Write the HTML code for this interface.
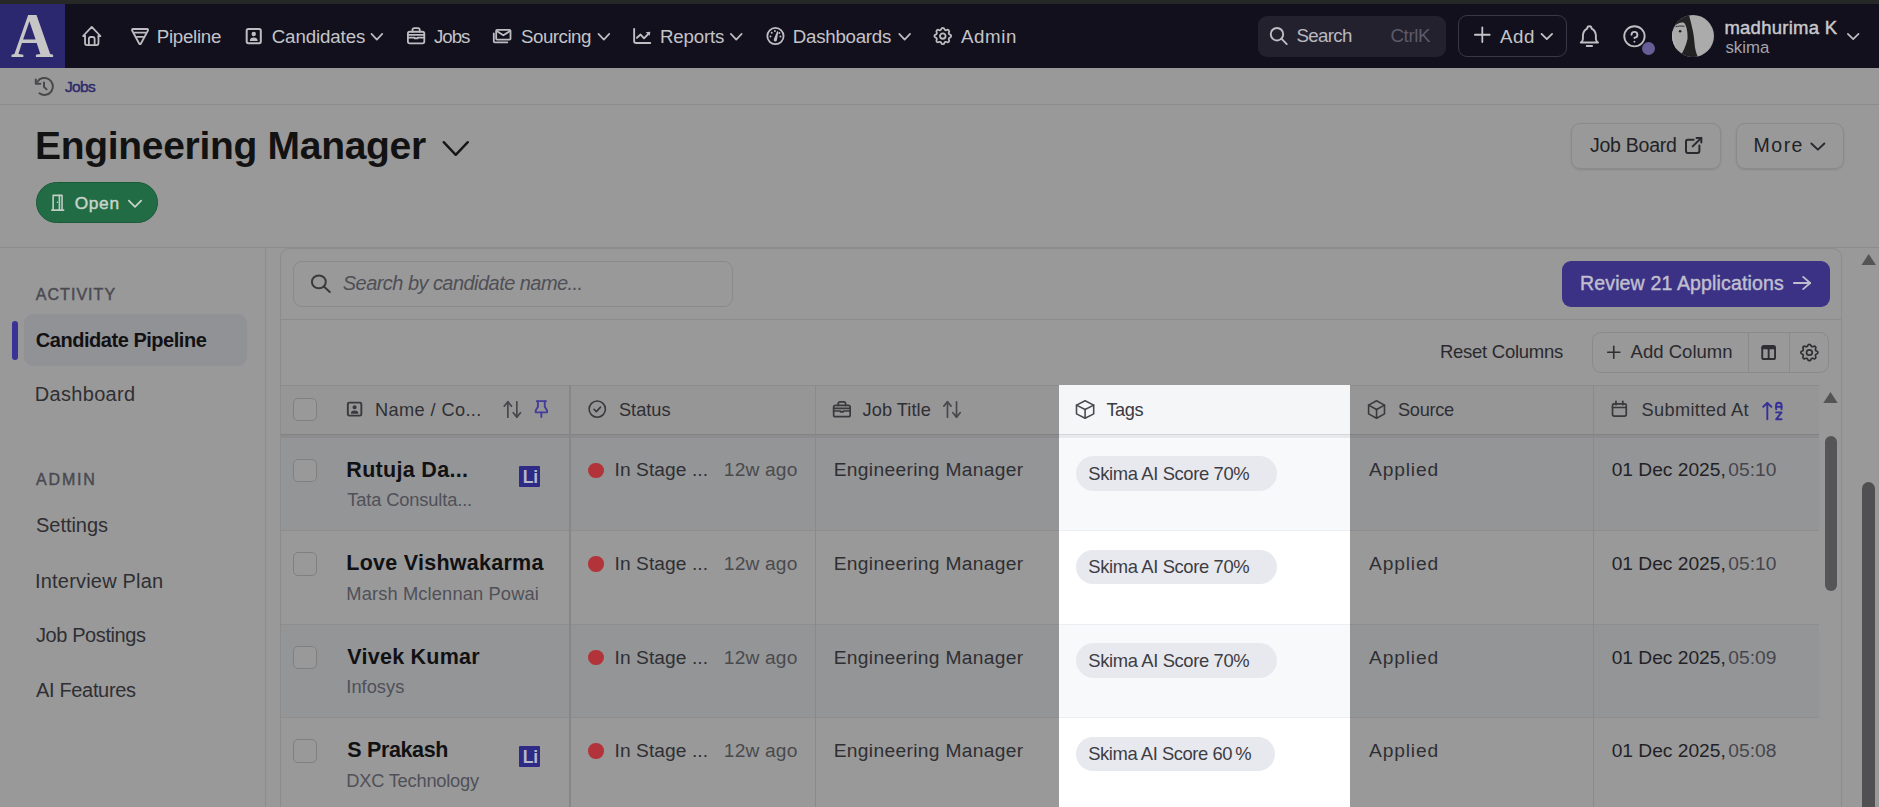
<!DOCTYPE html>
<html><head><meta charset="utf-8"><title>Engineering Manager</title><style>
*{margin:0;padding:0;box-sizing:border-box}
html,body{width:1879px;height:807px;overflow:hidden;background:#999999;font-family:"Liberation Sans", sans-serif}
.t{position:absolute;white-space:nowrap;line-height:1}
.b{position:absolute}
#icons{position:absolute;left:0;top:0;width:1879px;height:807px;overflow:visible}
</style></head>
<body>
<div class="b" style="left:0px;top:0px;width:1879px;height:4px;background:#262727"></div><div class="b" style="left:0px;top:4px;width:1879px;height:64px;background:#12101d"></div><div class="b" style="left:0px;top:4px;width:65px;height:64px;background:#2c2870"></div><div class="b" style="left:1258.4px;top:15.5px;width:187.4px;height:41.3px;background:#24212f;border-radius:9px"></div><div class="b" style="left:1457.8px;top:15.2px;width:109.2px;height:41.6px;border:1.3px solid #3a3848;border-radius:9px"></div><div class="b" style="left:1642px;top:41.8px;width:13px;height:13px;background:#675e98;border-radius:50%"></div><div class="b" style="left:0px;top:104px;width:1879px;height:1px;background:#8c8c8c"></div><div class="b" style="left:35.5px;top:182px;width:122px;height:41px;background:#226c45;border:1px solid #1b5a39;border-radius:21px"></div><div class="b" style="left:1570.9px;top:122.7px;width:150.5px;height:46.6px;border:1.3px solid #8a8a8a;border-radius:9px;box-shadow:0 1px 2px rgba(0,0,0,.12)"></div><div class="b" style="left:1735.5px;top:122.7px;width:108.7px;height:46.6px;border:1.3px solid #8a8a8a;border-radius:9px;box-shadow:0 1px 2px rgba(0,0,0,.12)"></div><div class="b" style="left:0px;top:246.5px;width:1879px;height:1px;background:#8c8c8c"></div><div class="b" style="left:264.5px;top:247px;width:1px;height:560px;background:#8c8c8c"></div><div class="b" style="left:24px;top:314.3px;width:222.5px;height:51.6px;background:#919296;border-radius:9px"></div><div class="b" style="left:11.8px;top:320.6px;width:5.9px;height:39.4px;background:#3a3396;border-radius:3px"></div><div class="b" style="left:280px;top:247.5px;width:1562px;height:600px;border:1px solid #8c8c8c;border-radius:9px"></div><div class="b" style="left:293px;top:260.8px;width:440px;height:46.2px;border:1.3px solid #8a8a8a;border-radius:9px"></div><div class="b" style="left:1561.7px;top:260.6px;width:268.3px;height:46.8px;background:#3b3286;border-radius:9px"></div><div class="b" style="left:281px;top:319px;width:1560px;height:1px;background:#8c8c8c"></div><div class="b" style="left:1591.6px;top:332.4px;width:237.8px;height:40.4px;border:1.3px solid #8a8a8a;border-radius:9px"></div><div class="b" style="left:1747.5px;top:333px;width:1.2px;height:39.5px;background:#8a8a8a"></div><div class="b" style="left:1789px;top:333px;width:1.2px;height:39.5px;background:#8a8a8a"></div><div class="b" style="left:281px;top:385px;width:1538px;height:49px;background:#969697"></div><div class="b" style="left:281px;top:384.5px;width:1538px;height:1px;background:#8c8c8c"></div><div class="b" style="left:281px;top:435px;width:1538px;height:96px;background:#949597"></div><div class="b" style="left:281px;top:531px;width:1538px;height:94px;background:#999999"></div><div class="b" style="left:281px;top:530px;width:1538px;height:1px;background:#8e8e8f"></div><div class="b" style="left:281px;top:625px;width:1538px;height:93px;background:#949597"></div><div class="b" style="left:281px;top:624px;width:1538px;height:1px;background:#8e8e8f"></div><div class="b" style="left:281px;top:718px;width:1538px;height:102px;background:#999999"></div><div class="b" style="left:281px;top:717px;width:1538px;height:1px;background:#8e8e8f"></div><div class="b" style="left:281px;top:434.5px;width:1538px;height:3.5px;background:#8c8c8e"></div><div class="b" style="left:281px;top:433.5px;width:1538px;height:1.3px;background:#828283"></div><div class="b" style="left:568.5px;top:385px;width:2px;height:430px;background:#87878a"></div><div class="b" style="left:815px;top:385px;width:1.2px;height:430px;background:#8a8a8b"></div><div class="b" style="left:1592.5px;top:385px;width:1.2px;height:430px;background:#8a8a8b"></div><div class="b" style="left:293px;top:397.7px;width:23.5px;height:23.5px;border:1.3px solid #808081;border-radius:5px;background:#999"></div><div class="b" style="left:293px;top:458.7px;width:23.5px;height:23.5px;border:1.3px solid #808081;border-radius:5px;background:#999"></div><div class="b" style="left:293px;top:552.2px;width:23.5px;height:23.5px;border:1.3px solid #808081;border-radius:5px;background:#999"></div><div class="b" style="left:293px;top:645.7px;width:23.5px;height:23.5px;border:1.3px solid #808081;border-radius:5px;background:#999"></div><div class="b" style="left:293px;top:739.2px;width:23.5px;height:23.5px;border:1.3px solid #808081;border-radius:5px;background:#999"></div><div class="b" style="left:519.1px;top:465.8px;width:21.3px;height:21.1px;background:#2f2a85;border-radius:1px"></div><div class="b" style="left:519.1px;top:746.3px;width:21.3px;height:21.1px;background:#2f2a85;border-radius:1px"></div><div class="b" style="left:588px;top:462.5px;width:15.5px;height:15.5px;background:#b2333a;border-radius:50%"></div><div class="b" style="left:588px;top:556.0px;width:15.5px;height:15.5px;background:#b2333a;border-radius:50%"></div><div class="b" style="left:588px;top:649.5px;width:15.5px;height:15.5px;background:#b2333a;border-radius:50%"></div><div class="b" style="left:588px;top:743.0px;width:15.5px;height:15.5px;background:#b2333a;border-radius:50%"></div><div class="b" style="left:1059px;top:385px;width:291px;height:430px;background:#ffffff"></div><div class="b" style="left:1059px;top:385px;width:291px;height:49px;background:#f5f6f8"></div><div class="b" style="left:1059px;top:435px;width:291px;height:96px;background:#f8f9fb"></div><div class="b" style="left:1059px;top:530px;width:291px;height:1px;background:#eceef2"></div><div class="b" style="left:1059px;top:625px;width:291px;height:93px;background:#f8f9fb"></div><div class="b" style="left:1059px;top:624px;width:291px;height:1px;background:#eceef2"></div><div class="b" style="left:1059px;top:717px;width:291px;height:1px;background:#eceef2"></div><div class="b" style="left:1059px;top:434.5px;width:291px;height:3.5px;background:#e8e9ec"></div><div class="b" style="left:1059px;top:433.5px;width:291px;height:1.3px;background:#d5d6da"></div><div class="b" style="left:1076px;top:456.0px;width:201px;height:34.6px;background:#e8e9ee;border-radius:18px"></div><div class="b" style="left:1076px;top:549.5px;width:201px;height:34.6px;background:#e8e9ee;border-radius:18px"></div><div class="b" style="left:1076px;top:643.0px;width:201px;height:34.6px;background:#e8e9ee;border-radius:18px"></div><div class="b" style="left:1076px;top:736.5px;width:199px;height:34.6px;background:#e8e9ee;border-radius:18px"></div><div class="b" style="left:1824.8px;top:435.7px;width:12px;height:155.6px;background:#555557;border-radius:6px"></div><div class="b" style="left:1862.3px;top:481.5px;width:12.5px;height:400px;background:#505052;border-radius:6.5px"></div>
<span class="t" style="left:10.5px;top:4px;font-family:'Liberation Serif',serif;font-size:64px;line-height:64px;color:#c6c6c6;font-weight:700;transform:scaleX(0.92);transform-origin:0 0">A</span>
<svg style="position:absolute;left:1672px;top:15px;width:42px;height:42px" viewBox="0 0 42 42"><defs><clipPath id="avc"><circle cx="21" cy="21" r="21"/></clipPath></defs><g clip-path="url(#avc)"><rect width="42" height="42" fill="#ababab"/><path d="M0 12L0 42H9C6 37 3 30 2 24C1 19 1 15 0 12Z" fill="#b4b4b4"/><path d="M0 0H17C19 8 22 18 22.5 28C23 34 24 38 26 42H8C11 37 14 31 15.5 24C16 16 14 9 11.5 7.5C8 7 4 9 0 13Z" fill="#222"/><path d="M3.5 11.8C6 11 9 10.8 12.5 11.3" stroke="#333" stroke-width="1" fill="none"/><circle cx="8.1" cy="16.2" r="1.3" fill="#222"/></g></svg>
<span class="t" style="left:522.8px;top:467.6px;font-size:17.5px;line-height:18px;font-weight:700;color:#b8b8cc;letter-spacing:-0.2px">Li</span><span class="t" style="left:522.8px;top:748.1px;font-size:17.5px;line-height:18px;font-weight:700;color:#b8b8cc;letter-spacing:-0.2px">Li</span>
<svg id="icons" viewBox="0 0 1879 807"><g transform="translate(80.217 23.867) scale(0.9611 1.0111)"><path d="M5 12H3l9-9 9 9h-2" fill="none" stroke="#bdbdc2" stroke-width="1.8" vector-effect="non-scaling-stroke" stroke-linecap="round" stroke-linejoin="round"/><path d="M5 12v7a2 2 0 0 0 2 2h10a2 2 0 0 0 2-2v-7" fill="none" stroke="#bdbdc2" stroke-width="1.8" vector-effect="non-scaling-stroke" stroke-linecap="round" stroke-linejoin="round"/><path d="M9 21v-6a2 2 0 0 1 2-2h2a2 2 0 0 1 2 2v6" fill="none" stroke="#bdbdc2" stroke-width="1.8" vector-effect="non-scaling-stroke" stroke-linecap="round" stroke-linejoin="round"/></g><g transform="translate(129.073 25.127) scale(0.9148 0.9682)"><path d="M4.2 4h15.6a1 1 0 0 1 .85 1.5l-7.8 13.7a1 1 0 0 1-1.7 0l-7.8-13.7a1 1 0 0 1 .85-1.5z" fill="none" stroke="#bdbdc2" stroke-width="1.8" vector-effect="non-scaling-stroke" stroke-linecap="round" stroke-linejoin="round"/><path d="M6 7.8h12" fill="none" stroke="#bdbdc2" stroke-width="1.8" vector-effect="non-scaling-stroke" stroke-linecap="round" stroke-linejoin="round"/><path d="M8.6 12.2h6.8" fill="none" stroke="#bdbdc2" stroke-width="1.8" vector-effect="non-scaling-stroke" stroke-linecap="round" stroke-linejoin="round"/></g><g transform="translate(244.350 26.517) scale(0.7833 0.7944)"><path d="M3 5a2 2 0 0 1 2-2h14a2 2 0 0 1 2 2v14a2 2 0 0 1-2 2h-14a2 2 0 0 1-2-2z" fill="none" stroke="#bdbdc2" stroke-width="2.0" vector-effect="non-scaling-stroke" stroke-linecap="round" stroke-linejoin="round"/><path d="M9.2 9.4a2.8 2.8 0 1 0 5.6 0a2.8 2.8 0 1 0-5.6 0z" fill="#bdbdc2"/><path d="M7 18.2a5 4.3 0 0 1 10 0z" fill="#bdbdc2"/></g><g transform="translate(405.167 25.535) scale(0.9111 0.8882)"><path d="M3 9a2 2 0 0 1 2-2h14a2 2 0 0 1 2 2v9a2 2 0 0 1-2 2h-14a2 2 0 0 1-2-2z" fill="none" stroke="#bdbdc2" stroke-width="1.8" vector-effect="non-scaling-stroke" stroke-linecap="round" stroke-linejoin="round"/><path d="M8 7v-2a2 2 0 0 1 2-2h4a2 2 0 0 1 2 2v2" fill="none" stroke="#bdbdc2" stroke-width="1.8" vector-effect="non-scaling-stroke" stroke-linecap="round" stroke-linejoin="round"/><path d="M3 10.5h18" fill="none" stroke="#bdbdc2" stroke-width="1.8" vector-effect="non-scaling-stroke" stroke-linecap="round" stroke-linejoin="round"/><path d="M3 13.5h7.5v1h3v-1h7.5" fill="none" stroke="#bdbdc2" stroke-width="1.8" vector-effect="non-scaling-stroke" stroke-linecap="round" stroke-linejoin="round"/></g><g transform="translate(490.460 26.467) scale(0.9543 0.8333)"><path d="M7 4h13a1 1 0 0 1 1 1v9.7a1 1 0 0 1-1 1h-13a1 1 0 0 1-1-1v-9.7a1 1 0 0 1 1-1z" fill="none" stroke="#bdbdc2" stroke-width="1.8" vector-effect="non-scaling-stroke" stroke-linecap="round" stroke-linejoin="round"/><path d="M6.5 5.5l7 5 7-5" fill="none" stroke="#bdbdc2" stroke-width="1.8" vector-effect="non-scaling-stroke" stroke-linecap="round" stroke-linejoin="round"/><path d="M3.5 8.4v9.6a1 1 0 0 0 1 1h13.2" fill="none" stroke="#bdbdc2" stroke-width="1.8" vector-effect="non-scaling-stroke" stroke-linecap="round" stroke-linejoin="round"/></g><g transform="translate(630.125 25.300) scale(1.0063 0.8875)"><path d="M4 4v14a2 2 0 0 0 2 2h14" fill="none" stroke="#bdbdc2" stroke-width="1.9" vector-effect="non-scaling-stroke" stroke-linecap="round" stroke-linejoin="round"/><path d="M6.8 14.1l3.6-3.7 3.4 4.3 5.2-6" fill="none" stroke="#bdbdc2" stroke-width="1.9" vector-effect="non-scaling-stroke" stroke-linecap="round" stroke-linejoin="round"/><path d="M20 7.2l-4.6.6 4 3.9z" fill="#bdbdc2"/></g><g transform="translate(764.583 25.183) scale(0.9056 0.9056)"><path d="M12 12m-9 0a9 9 0 1 0 18 0a9 9 0 1 0-18 0" fill="none" stroke="#bdbdc2" stroke-width="1.8" vector-effect="non-scaling-stroke" stroke-linecap="round" stroke-linejoin="round"/><path d="M10.2 15.6L13.6 7.2a.8 .8 0 0 1 1.5 .5L13.7 16.2a1.8 1.8 0 1 1-3.5-.6z" fill="#bdbdc2"/><path d="M5.4 12.4a1.1 1.1 0 1 0 2.2 0a1.1 1.1 0 1 0-2.2 0z" fill="#bdbdc2"/><path d="M6.8 8.3a1.1 1.1 0 1 0 2.2 0a1.1 1.1 0 1 0-2.2 0z" fill="#bdbdc2"/><path d="M10.3 6.3a1.1 1.1 0 1 0 2.2 0a1.1 1.1 0 1 0-2.2 0z" fill="#bdbdc2"/><path d="M16.4 12.4a1.1 1.1 0 1 0 2.2 0a1.1 1.1 0 1 0-2.2 0z" fill="#bdbdc2"/><path d="M15.2 8.5a1.1 1.1 0 1 0 2.2 0a1.1 1.1 0 1 0-2.2 0z" fill="#bdbdc2"/></g><g transform="translate(931.600 25.183) scale(0.9333 0.9056)"><path d="M10.325 4.317c.426-1.756 2.924-1.756 3.35 0a1.724 1.724 0 0 0 2.573 1.066c1.543-.94 3.31.826 2.37 2.37a1.724 1.724 0 0 0 1.065 2.572c1.756.426 1.756 2.924 0 3.35a1.724 1.724 0 0 0-1.066 2.573c.94 1.543-.826 3.31-2.37 2.37a1.724 1.724 0 0 0-2.572 1.065c-.426 1.756-2.924 1.756-3.35 0a1.724 1.724 0 0 0-2.573-1.066c-1.543.94-3.31-.826-2.37-2.37a1.724 1.724 0 0 0-1.065-2.572c-1.756-.426-1.756-2.924 0-3.35a1.724 1.724 0 0 0 1.066-2.573c-.94-1.543.826-3.31 2.37-2.37c1 .608 2.296.07 2.572-1.065z" fill="none" stroke="#bdbdc2" stroke-width="1.8" vector-effect="non-scaling-stroke" stroke-linecap="round" stroke-linejoin="round"/><path d="M9 12a3 3 0 1 0 6 0a3 3 0 0 0-6 0" fill="none" stroke="#bdbdc2" stroke-width="1.8" vector-effect="non-scaling-stroke" stroke-linecap="round" stroke-linejoin="round"/></g><g transform="translate(366.050 25.300) scale(0.9000 0.9500)"><path d="M6 9l6 6 6-6" fill="none" stroke="#bdbdc2" stroke-width="1.7" vector-effect="non-scaling-stroke" stroke-linecap="round" stroke-linejoin="round"/></g><g transform="translate(593.050 25.300) scale(0.9000 0.9500)"><path d="M6 9l6 6 6-6" fill="none" stroke="#bdbdc2" stroke-width="1.7" vector-effect="non-scaling-stroke" stroke-linecap="round" stroke-linejoin="round"/></g><g transform="translate(725.450 25.300) scale(0.9000 0.9500)"><path d="M6 9l6 6 6-6" fill="none" stroke="#bdbdc2" stroke-width="1.7" vector-effect="non-scaling-stroke" stroke-linecap="round" stroke-linejoin="round"/></g><g transform="translate(893.850 25.300) scale(0.9000 0.9500)"><path d="M6 9l6 6 6-6" fill="none" stroke="#bdbdc2" stroke-width="1.7" vector-effect="non-scaling-stroke" stroke-linecap="round" stroke-linejoin="round"/></g><g transform="translate(1268.083 25.267) scale(0.8889 0.8944)"><path d="M10 10m-7 0a7 7 0 1 0 14 0a7 7 0 1 0-14 0" fill="none" stroke="#bdbdc2" stroke-width="1.9" vector-effect="non-scaling-stroke" stroke-linecap="round" stroke-linejoin="round"/><path d="M21 21l-6-6" fill="none" stroke="#bdbdc2" stroke-width="1.9" vector-effect="non-scaling-stroke" stroke-linecap="round" stroke-linejoin="round"/></g><g transform="translate(1469.614 22.150) scale(1.0571 1.0500)"><path d="M12 5v14" fill="none" stroke="#c4c4c8" stroke-width="1.8" vector-effect="non-scaling-stroke" stroke-linecap="round" stroke-linejoin="round"/><path d="M5 12h14" fill="none" stroke="#c4c4c8" stroke-width="1.8" vector-effect="non-scaling-stroke" stroke-linecap="round" stroke-linejoin="round"/></g><g transform="translate(1536.200 26.100) scale(0.8833 0.8667)"><path d="M6 9l6 6 6-6" fill="none" stroke="#c4c4c8" stroke-width="1.8" vector-effect="non-scaling-stroke" stroke-linecap="round" stroke-linejoin="round"/></g><g transform="translate(1576.425 22.756) scale(1.0813 1.1647)"><path d="M10 5a2 2 0 1 1 4 0a7 7 0 0 1 4 6v3a4 4 0 0 0 2 3h-16a4 4 0 0 0 2-3v-3a7 7 0 0 1 4-6" fill="none" stroke="#bdbdc2" stroke-width="1.9" vector-effect="non-scaling-stroke" stroke-linecap="round" stroke-linejoin="round"/><path d="M9.5 20h5" fill="none" stroke="#bdbdc2" stroke-width="1.9" vector-effect="non-scaling-stroke" stroke-linecap="round" stroke-linejoin="round"/></g><g transform="translate(1620.850 22.900) scale(1.1333 1.1167)"><path d="M12 12m-9 0a9 9 0 1 0 18 0a9 9 0 1 0-18 0" fill="none" stroke="#bdbdc2" stroke-width="1.9" vector-effect="non-scaling-stroke" stroke-linecap="round" stroke-linejoin="round"/><path d="M12 16.8v.01" fill="none" stroke="#bdbdc2" stroke-width="1.9" vector-effect="non-scaling-stroke" stroke-linecap="round" stroke-linejoin="round"/><path d="M12 13.6v-.4a2.6 2.6 0 1 0-2.6-2.6" fill="none" stroke="#bdbdc2" stroke-width="1.9" vector-effect="non-scaling-stroke" stroke-linecap="round" stroke-linejoin="round"/></g><g transform="translate(1842.500 25.900) scale(0.8917 0.8833)"><path d="M6 9l6 6 6-6" fill="none" stroke="#bdbdc2" stroke-width="1.7" vector-effect="non-scaling-stroke" stroke-linecap="round" stroke-linejoin="round"/></g><g fill="none" stroke="#48484c" stroke-width="2" stroke-linecap="round" stroke-linejoin="round"><path d="M37.4 81.7A8.5 8.5 0 1 1 39.4 93.3"/><path d="M35.8 79.5V83.8H40.3"/><path d="M44 82.4V86.9L46.6 89.4"/></g><g transform="translate(431.650 123.300) scale(2.0083 2.1000)"><path d="M6 9l6 6 6-6" fill="none" stroke="#161616" stroke-width="2.4" vector-effect="non-scaling-stroke" stroke-linecap="round" stroke-linejoin="round"/></g><g transform="translate(49.817 191.941) scale(0.6611 0.8647)"><path d="M3 21h18" fill="none" stroke="#c0ccc4" stroke-width="1.6" vector-effect="non-scaling-stroke" stroke-linecap="round" stroke-linejoin="round"/><path d="M5 21v-17h9.5v17" fill="none" stroke="#c0ccc4" stroke-width="1.6" vector-effect="non-scaling-stroke" stroke-linecap="round" stroke-linejoin="round"/><path d="M14.5 4h4v17" fill="none" stroke="#c0ccc4" stroke-width="1.6" vector-effect="non-scaling-stroke" stroke-linecap="round" stroke-linejoin="round"/><path d="M11.5 12h.01" fill="none" stroke="#c0ccc4" stroke-width="1.6" vector-effect="non-scaling-stroke" stroke-linecap="round" stroke-linejoin="round"/></g><g transform="translate(122.700 191.100) scale(1.0250 1.0500)"><path d="M6 9l6 6 6-6" fill="none" stroke="#c8d4cc" stroke-width="1.7" vector-effect="non-scaling-stroke" stroke-linecap="round" stroke-linejoin="round"/></g><g transform="translate(1682.175 134.125) scale(0.9562 0.9437)"><path d="M12 6h-6a2 2 0 0 0-2 2v10a2 2 0 0 0 2 2h10a2 2 0 0 0 2-2v-6" fill="none" stroke="#2a2a2e" stroke-width="2.0" vector-effect="non-scaling-stroke" stroke-linecap="round" stroke-linejoin="round"/><path d="M11 13l9-9" fill="none" stroke="#2a2a2e" stroke-width="2.0" vector-effect="non-scaling-stroke" stroke-linecap="round" stroke-linejoin="round"/><path d="M15 4h5v5" fill="none" stroke="#2a2a2e" stroke-width="2.0" vector-effect="non-scaling-stroke" stroke-linecap="round" stroke-linejoin="round"/></g><g transform="translate(1804.850 134.150) scale(1.0833 1.0333)"><path d="M6 9l6 6 6-6" fill="none" stroke="#2a2a2e" stroke-width="1.9" vector-effect="non-scaling-stroke" stroke-linecap="round" stroke-linejoin="round"/></g><g transform="translate(308.917 272.633) scale(0.9944 0.9222)"><path d="M10 10m-7 0a7 7 0 1 0 14 0a7 7 0 1 0-14 0" fill="none" stroke="#3a3a3e" stroke-width="2.0" vector-effect="non-scaling-stroke" stroke-linecap="round" stroke-linejoin="round"/><path d="M21 21l-6-6" fill="none" stroke="#3a3a3e" stroke-width="2.0" vector-effect="non-scaling-stroke" stroke-linecap="round" stroke-linejoin="round"/></g><g transform="translate(1788.114 270.800) scale(1.1571 1.0167)"><path d="M5 12h14" fill="none" stroke="#bfbecd" stroke-width="1.8" vector-effect="non-scaling-stroke" stroke-linecap="round" stroke-linejoin="round"/><path d="M13 18l6-6" fill="none" stroke="#bfbecd" stroke-width="1.8" vector-effect="non-scaling-stroke" stroke-linecap="round" stroke-linejoin="round"/><path d="M13 6l6 6" fill="none" stroke="#bfbecd" stroke-width="1.8" vector-effect="non-scaling-stroke" stroke-linecap="round" stroke-linejoin="round"/></g><g transform="translate(1603.379 342.186) scale(0.8643 0.8429)"><path d="M12 5v14" fill="none" stroke="#2f2f33" stroke-width="1.6" vector-effect="non-scaling-stroke" stroke-linecap="round" stroke-linejoin="round"/><path d="M5 12h14" fill="none" stroke="#2f2f33" stroke-width="1.6" vector-effect="non-scaling-stroke" stroke-linecap="round" stroke-linejoin="round"/></g><g transform="translate(1759.050 342.675) scale(0.8000 0.8187)"><path d="M4 6a2 2 0 0 1 2-2h12a2 2 0 0 1 2 2v12a2 2 0 0 1-2 2h-12a2 2 0 0 1-2-2z" fill="none" stroke="#2f2f33" stroke-width="1.9" vector-effect="non-scaling-stroke" stroke-linecap="round" stroke-linejoin="round"/><path d="M12 8v12" fill="none" stroke="#2f2f33" stroke-width="1.9" vector-effect="non-scaling-stroke" stroke-linecap="round" stroke-linejoin="round"/><path d="M4 6.5h16" fill="none" stroke="#2f2f33" stroke-width="1.9" vector-effect="non-scaling-stroke" stroke-linecap="round" stroke-linejoin="round"/><path d="M4 6a2 2 0 0 1 2-2h12a2 2 0 0 1 2 2v2h-16z" fill="#2f2f33"/></g><g transform="translate(1798.008 341.633) scale(0.9472 0.9056)"><path d="M10.325 4.317c.426-1.756 2.924-1.756 3.35 0a1.724 1.724 0 0 0 2.573 1.066c1.543-.94 3.31.826 2.37 2.37a1.724 1.724 0 0 0 1.065 2.572c1.756.426 1.756 2.924 0 3.35a1.724 1.724 0 0 0-1.066 2.573c.94 1.543-.826 3.31-2.37 2.37a1.724 1.724 0 0 0-2.572 1.065c-.426 1.756-2.924 1.756-3.35 0a1.724 1.724 0 0 0-2.573-1.066c-1.543.94-3.31-.826-2.37-2.37a1.724 1.724 0 0 0-1.065-2.572c-1.756-.426-1.756-2.924 0-3.35a1.724 1.724 0 0 0 1.066-2.573c-.94-1.543.826-3.31 2.37-2.37c1 .608 2.296.07 2.572-1.065z" fill="none" stroke="#2f2f33" stroke-width="1.7" vector-effect="non-scaling-stroke" stroke-linecap="round" stroke-linejoin="round"/><path d="M9 12a3 3 0 1 0 6 0a3 3 0 0 0-6 0" fill="none" stroke="#2f2f33" stroke-width="1.7" vector-effect="non-scaling-stroke" stroke-linecap="round" stroke-linejoin="round"/></g><g transform="translate(345.600 400.483) scale(0.7500 0.7222)"><path d="M3 5a2 2 0 0 1 2-2h14a2 2 0 0 1 2 2v14a2 2 0 0 1-2 2h-14a2 2 0 0 1-2-2z" fill="none" stroke="#3a3a3e" stroke-width="1.9" vector-effect="non-scaling-stroke" stroke-linecap="round" stroke-linejoin="round"/><path d="M9.2 9.4a2.8 2.8 0 1 0 5.6 0a2.8 2.8 0 1 0-5.6 0z" fill="#3a3a3e"/><path d="M7 18.2a5 4.3 0 0 1 10 0z" fill="#3a3a3e"/></g><g transform="translate(501.550 396.250) scale(0.9000 1.1000)"><path d="M3 9l4-4 4 4" fill="none" stroke="#48484c" stroke-width="1.7" vector-effect="non-scaling-stroke" stroke-linecap="round" stroke-linejoin="round"/><path d="M7 5v14" fill="none" stroke="#48484c" stroke-width="1.7" vector-effect="non-scaling-stroke" stroke-linecap="round" stroke-linejoin="round"/><path d="M21 15l-4 4-4-4" fill="none" stroke="#48484c" stroke-width="1.7" vector-effect="non-scaling-stroke" stroke-linecap="round" stroke-linejoin="round"/><path d="M17 19v-14" fill="none" stroke="#48484c" stroke-width="1.7" vector-effect="non-scaling-stroke" stroke-linecap="round" stroke-linejoin="round"/></g><g transform="translate(527.670 397.409) scale(1.1400 0.9353)"><path d="M9 4v6l-2 4v2h10v-2l-2-4v-6" fill="none" stroke="#443d9a" stroke-width="1.9" vector-effect="non-scaling-stroke" stroke-linecap="round" stroke-linejoin="round"/><path d="M12 16v5" fill="none" stroke="#443d9a" stroke-width="1.9" vector-effect="non-scaling-stroke" stroke-linecap="round" stroke-linejoin="round"/><path d="M8 4h8" fill="none" stroke="#443d9a" stroke-width="1.9" vector-effect="non-scaling-stroke" stroke-linecap="round" stroke-linejoin="round"/></g><g transform="translate(586.383 398.300) scale(0.9056 0.9000)"><path d="M12 12m-9 0a9 9 0 1 0 18 0a9 9 0 1 0-18 0" fill="none" stroke="#3a3a3e" stroke-width="1.6" vector-effect="non-scaling-stroke" stroke-linecap="round" stroke-linejoin="round"/><path d="M8.5 12.3l2.5 2.5 4.6-5" fill="none" stroke="#3a3a3e" stroke-width="1.6" vector-effect="non-scaling-stroke" stroke-linecap="round" stroke-linejoin="round"/></g><g transform="translate(830.900 399.238) scale(0.9167 0.8706)"><path d="M3 9a2 2 0 0 1 2-2h14a2 2 0 0 1 2 2v9a2 2 0 0 1-2 2h-14a2 2 0 0 1-2-2z" fill="none" stroke="#3a3a3e" stroke-width="1.7" vector-effect="non-scaling-stroke" stroke-linecap="round" stroke-linejoin="round"/><path d="M8 7v-2a2 2 0 0 1 2-2h4a2 2 0 0 1 2 2v2" fill="none" stroke="#3a3a3e" stroke-width="1.7" vector-effect="non-scaling-stroke" stroke-linecap="round" stroke-linejoin="round"/><path d="M3 10.5h18" fill="none" stroke="#3a3a3e" stroke-width="1.7" vector-effect="non-scaling-stroke" stroke-linecap="round" stroke-linejoin="round"/><path d="M3 13.5h7.5v1h3v-1h7.5" fill="none" stroke="#3a3a3e" stroke-width="1.7" vector-effect="non-scaling-stroke" stroke-linecap="round" stroke-linejoin="round"/></g><g transform="translate(941.133 396.250) scale(0.9056 1.1000)"><path d="M3 9l4-4 4 4" fill="none" stroke="#48484c" stroke-width="1.7" vector-effect="non-scaling-stroke" stroke-linecap="round" stroke-linejoin="round"/><path d="M7 5v14" fill="none" stroke="#48484c" stroke-width="1.7" vector-effect="non-scaling-stroke" stroke-linecap="round" stroke-linejoin="round"/><path d="M21 15l-4 4-4-4" fill="none" stroke="#48484c" stroke-width="1.7" vector-effect="non-scaling-stroke" stroke-linecap="round" stroke-linejoin="round"/><path d="M17 19v-14" fill="none" stroke="#48484c" stroke-width="1.7" vector-effect="non-scaling-stroke" stroke-linecap="round" stroke-linejoin="round"/></g><g transform="translate(1072.200 397.900) scale(1.0750 0.9667)"><path d="M12 3l8 4.5v9l-8 4.5-8-4.5v-9z" fill="none" stroke="#4a4a52" stroke-width="1.6" vector-effect="non-scaling-stroke" stroke-linecap="round" stroke-linejoin="round"/><path d="M12 12l8-4.5" fill="none" stroke="#4a4a52" stroke-width="1.6" vector-effect="non-scaling-stroke" stroke-linecap="round" stroke-linejoin="round"/><path d="M12 12v9" fill="none" stroke="#4a4a52" stroke-width="1.6" vector-effect="non-scaling-stroke" stroke-linecap="round" stroke-linejoin="round"/><path d="M12 12l-8-4.5" fill="none" stroke="#4a4a52" stroke-width="1.6" vector-effect="non-scaling-stroke" stroke-linecap="round" stroke-linejoin="round"/></g><g transform="translate(1364.625 397.900) scale(0.9938 0.9667)"><path d="M12 3l8 4.5v9l-8 4.5-8-4.5v-9z" fill="none" stroke="#3a3a3e" stroke-width="1.6" vector-effect="non-scaling-stroke" stroke-linecap="round" stroke-linejoin="round"/><path d="M12 12l8-4.5" fill="none" stroke="#3a3a3e" stroke-width="1.6" vector-effect="non-scaling-stroke" stroke-linecap="round" stroke-linejoin="round"/><path d="M12 12v9" fill="none" stroke="#3a3a3e" stroke-width="1.6" vector-effect="non-scaling-stroke" stroke-linecap="round" stroke-linejoin="round"/><path d="M12 12l-8-4.5" fill="none" stroke="#3a3a3e" stroke-width="1.6" vector-effect="non-scaling-stroke" stroke-linecap="round" stroke-linejoin="round"/></g><g transform="translate(1609.125 398.883) scale(0.8562 0.8222)"><path d="M4 8a2 2 0 0 1 2-2h12a2 2 0 0 1 2 2v11a2 2 0 0 1-2 2h-12a2 2 0 0 1-2-2z" fill="none" stroke="#3a3a3e" stroke-width="1.7" vector-effect="non-scaling-stroke" stroke-linecap="round" stroke-linejoin="round"/><path d="M16 3v4" fill="none" stroke="#3a3a3e" stroke-width="1.7" vector-effect="non-scaling-stroke" stroke-linecap="round" stroke-linejoin="round"/><path d="M8 3v4" fill="none" stroke="#3a3a3e" stroke-width="1.7" vector-effect="non-scaling-stroke" stroke-linecap="round" stroke-linejoin="round"/><path d="M4 10.5h16" fill="none" stroke="#3a3a3e" stroke-width="1.7" vector-effect="non-scaling-stroke" stroke-linecap="round" stroke-linejoin="round"/></g><g transform="translate(1757.828 395.573) scale(1.3556 1.2462)"><path d="M4 9l3-3 3 3" fill="none" stroke="#35309a" stroke-width="1.9" vector-effect="non-scaling-stroke" stroke-linecap="round" stroke-linejoin="round"/><path d="M7 6v13" fill="none" stroke="#35309a" stroke-width="1.9" vector-effect="non-scaling-stroke" stroke-linecap="round" stroke-linejoin="round"/><path d="M13.5 11v-3.2a2 2 0 0 1 4 0v3.2" fill="none" stroke="#35309a" stroke-width="1.9" vector-effect="non-scaling-stroke" stroke-linecap="round" stroke-linejoin="round"/><path d="M13.5 9h4" fill="none" stroke="#35309a" stroke-width="1.9" vector-effect="non-scaling-stroke" stroke-linecap="round" stroke-linejoin="round"/><path d="M13.5 13.5h4l-4 5.5h4" fill="none" stroke="#35309a" stroke-width="1.9" vector-effect="non-scaling-stroke" stroke-linecap="round" stroke-linejoin="round"/></g><path d="M1830.5 392L1837.7 403H1823.3z" fill="#545456"/><path d="M1868.7 254L1876 265H1861.5z" fill="#545456"/></svg>
<span class="t" style="left:156.7px;top:28.00px;font-size:18.7px;color:#c4c4c8;letter-spacing:-0.257px;">Pipeline</span><span class="t" style="left:271.7px;top:28.00px;font-size:18.7px;color:#c4c4c8;letter-spacing:-0.100px;">Candidates</span><span class="t" style="left:434.0px;top:28.00px;font-size:18.7px;color:#c4c4c8;letter-spacing:-1.043px;">Jobs</span><span class="t" style="left:521.0px;top:28.00px;font-size:18.7px;color:#c4c4c8;letter-spacing:-0.480px;">Sourcing</span><span class="t" style="left:660.0px;top:28.00px;font-size:18.7px;color:#c4c4c8;letter-spacing:-0.182px;">Reports</span><span class="t" style="left:792.8px;top:28.00px;font-size:18.7px;color:#c4c4c8;letter-spacing:-0.247px;">Dashboards</span><span class="t" style="left:961.0px;top:28.00px;font-size:18.7px;color:#c4c4c8;letter-spacing:0.606px;">Admin</span><span class="t" style="left:1296.5px;top:27.00px;font-size:18.7px;color:#b9b9c0;letter-spacing:-0.663px;">Search</span><span class="t" style="left:1390.5px;top:27.00px;font-size:18.7px;color:#5c5a6a;letter-spacing:-0.391px;">CtrlK</span><span class="t" style="left:1500.0px;top:28.00px;font-size:18.7px;color:#c4c4c8;letter-spacing:0.571px;">Add</span><span class="t" style="left:1724.4px;top:19.00px;font-size:18.5px;color:#c8c8cc;letter-spacing:0.262px;-webkit-text-stroke:0.45px #c8c8cc;">madhurima K</span><span class="t" style="left:1725.4px;top:40.00px;font-size:16.8px;color:#a4a4ac;letter-spacing:0.028px;">skima</span><span class="t" style="left:65.0px;top:79.00px;font-size:15.5px;color:#2e2a6c;letter-spacing:-0.664px;-webkit-text-stroke:0.45px #2e2a6c;">Jobs</span><span class="t" style="left:35.0px;top:126.00px;font-size:39px;color:#121212;font-weight:700;letter-spacing:-0.300px;">Engineering Manager</span><span class="t" style="left:74.7px;top:195.00px;font-size:17.3px;color:#c8d4cc;letter-spacing:0.679px;-webkit-text-stroke:0.45px #c8d4cc;">Open</span><span class="t" style="left:1590.0px;top:136.00px;font-size:19.5px;color:#222226;letter-spacing:-0.256px;">Job Board</span><span class="t" style="left:1753.6px;top:136.00px;font-size:19.5px;color:#222226;letter-spacing:1.473px;">More</span><span class="t" style="left:35.8px;top:287.00px;font-size:16px;color:#4a4a52;letter-spacing:1.038px;-webkit-text-stroke:0.45px #4a4a52;">ACTIVITY</span><span class="t" style="left:35.8px;top:330.00px;font-size:20px;color:#111114;font-weight:700;letter-spacing:-0.465px;">Candidate Pipeline</span><span class="t" style="left:34.8px;top:384.00px;font-size:20px;color:#2f2f33;letter-spacing:0.310px;">Dashboard</span><span class="t" style="left:36.0px;top:472.00px;font-size:16px;color:#4a4a52;letter-spacing:1.825px;-webkit-text-stroke:0.45px #4a4a52;">ADMIN</span><span class="t" style="left:36.0px;top:515.00px;font-size:20px;color:#2f2f33;letter-spacing:-0.038px;">Settings</span><span class="t" style="left:35.0px;top:571.00px;font-size:20px;color:#2f2f33;letter-spacing:0.193px;">Interview Plan</span><span class="t" style="left:36.0px;top:625.00px;font-size:20px;color:#2f2f33;letter-spacing:-0.410px;">Job Postings</span><span class="t" style="left:36.0px;top:680.00px;font-size:20px;color:#2f2f33;letter-spacing:-0.338px;">AI Features</span><span class="t" style="left:342.8px;top:273.00px;font-size:20px;color:#4f4f56;font-style:italic;letter-spacing:-0.548px;">Search by candidate name...</span><span class="t" style="left:1580.0px;top:274.00px;font-size:19.5px;color:#bfbecd;letter-spacing:0.150px;-webkit-text-stroke:0.45px #bfbecd;">Review 21 Applications</span><span class="t" style="left:1440.0px;top:343.00px;font-size:18.5px;color:#2a2a2e;letter-spacing:-0.268px;">Reset Columns</span><span class="t" style="left:1630.6px;top:343.00px;font-size:18.5px;color:#2a2a2e;letter-spacing:0.021px;">Add Column</span><span class="t" style="left:375.0px;top:401.00px;font-size:18.2px;color:#2f2f33;letter-spacing:0.388px;">Name / Co...</span><span class="t" style="left:618.9px;top:401.00px;font-size:18.2px;color:#2f2f33;letter-spacing:0.027px;">Status</span><span class="t" style="left:862.6px;top:401.00px;font-size:18.2px;color:#2f2f33;letter-spacing:0.057px;">Job Title</span><span class="t" style="left:1106.4px;top:401.00px;font-size:18.2px;color:#3a3a42;letter-spacing:-0.441px;">Tags</span><span class="t" style="left:1398.0px;top:401.00px;font-size:18.2px;color:#2f2f33;letter-spacing:-0.302px;">Source</span><span class="t" style="left:1641.5px;top:401.00px;font-size:18.2px;color:#2f2f33;letter-spacing:0.357px;">Submitted At</span><span class="t" style="left:346.3px;top:460.00px;font-size:21.5px;color:#111114;font-weight:700;letter-spacing:0.310px;">Rutuja Da...</span><span class="t" style="left:347.3px;top:491.00px;font-size:18.3px;color:#505058;letter-spacing:-0.143px;">Tata Consulta...</span><span class="t" style="left:614.6px;top:460.00px;font-size:19.2px;color:#2f2f33;letter-spacing:0.057px;">In Stage ...</span><span class="t" style="left:723.8px;top:460.00px;font-size:19.2px;color:#4a4a4e;letter-spacing:0.171px;">12w ago</span><span class="t" style="left:833.7px;top:460.00px;font-size:19.2px;color:#2f2f33;letter-spacing:0.329px;">Engineering Manager</span><span class="t" style="left:1088.3px;top:465.00px;font-size:18.4px;color:#3d3d45;letter-spacing:-0.370px;">Skima AI Score 70%</span><span class="t" style="left:1369.0px;top:460.00px;font-size:19.2px;color:#2f2f33;letter-spacing:0.844px;">Applied</span><span class="t" style="left:1611.7px;top:460.00px;font-size:19.2px;color:#222226;letter-spacing:-0.010px;">01 Dec 2025,</span><span class="t" style="left:1728.3px;top:460.00px;font-size:19.2px;color:#46464c;letter-spacing:0.014px;">05:10</span><span class="t" style="left:346.3px;top:553.00px;font-size:21.5px;color:#111114;font-weight:700;letter-spacing:0.257px;">Love Vishwakarma</span><span class="t" style="left:346.3px;top:585.00px;font-size:18.3px;color:#505058;letter-spacing:0.134px;">Marsh Mclennan Powai</span><span class="t" style="left:614.6px;top:554.00px;font-size:19.2px;color:#2f2f33;letter-spacing:0.057px;">In Stage ...</span><span class="t" style="left:723.8px;top:554.00px;font-size:19.2px;color:#4a4a4e;letter-spacing:0.171px;">12w ago</span><span class="t" style="left:833.7px;top:554.00px;font-size:19.2px;color:#2f2f33;letter-spacing:0.329px;">Engineering Manager</span><span class="t" style="left:1088.3px;top:558.00px;font-size:18.4px;color:#3d3d45;letter-spacing:-0.370px;">Skima AI Score 70%</span><span class="t" style="left:1369.0px;top:554.00px;font-size:19.2px;color:#2f2f33;letter-spacing:0.844px;">Applied</span><span class="t" style="left:1611.7px;top:554.00px;font-size:19.2px;color:#222226;letter-spacing:-0.010px;">01 Dec 2025,</span><span class="t" style="left:1728.3px;top:554.00px;font-size:19.2px;color:#46464c;letter-spacing:0.014px;">05:10</span><span class="t" style="left:347.3px;top:647.00px;font-size:21.5px;color:#111114;font-weight:700;letter-spacing:0.250px;">Vivek Kumar</span><span class="t" style="left:346.3px;top:678.00px;font-size:18.3px;color:#505058;letter-spacing:0.021px;">Infosys</span><span class="t" style="left:614.6px;top:648.00px;font-size:19.2px;color:#2f2f33;letter-spacing:0.057px;">In Stage ...</span><span class="t" style="left:723.8px;top:648.00px;font-size:19.2px;color:#4a4a4e;letter-spacing:0.171px;">12w ago</span><span class="t" style="left:833.7px;top:648.00px;font-size:19.2px;color:#2f2f33;letter-spacing:0.329px;">Engineering Manager</span><span class="t" style="left:1088.3px;top:652.00px;font-size:18.4px;color:#3d3d45;letter-spacing:-0.370px;">Skima AI Score 70%</span><span class="t" style="left:1369.0px;top:648.00px;font-size:19.2px;color:#2f2f33;letter-spacing:0.844px;">Applied</span><span class="t" style="left:1611.7px;top:648.00px;font-size:19.2px;color:#222226;letter-spacing:-0.010px;">01 Dec 2025,</span><span class="t" style="left:1728.3px;top:648.00px;font-size:19.2px;color:#46464c;letter-spacing:0.014px;">05:09</span><span class="t" style="left:347.3px;top:740.00px;font-size:21.5px;color:#111114;font-weight:700;letter-spacing:-0.356px;">S Prakash</span><span class="t" style="left:346.3px;top:772.00px;font-size:18.3px;color:#505058;letter-spacing:-0.232px;">DXC Technology</span><span class="t" style="left:614.6px;top:741.00px;font-size:19.2px;color:#2f2f33;letter-spacing:0.057px;">In Stage ...</span><span class="t" style="left:723.8px;top:741.00px;font-size:19.2px;color:#4a4a4e;letter-spacing:0.171px;">12w ago</span><span class="t" style="left:833.7px;top:741.00px;font-size:19.2px;color:#2f2f33;letter-spacing:0.329px;">Engineering Manager</span><span class="t" style="left:1088.3px;top:745.00px;font-size:18.4px;color:#3d3d45;letter-spacing:-0.443px;">Skima AI Score 60 %</span><span class="t" style="left:1369.0px;top:741.00px;font-size:19.2px;color:#2f2f33;letter-spacing:0.844px;">Applied</span><span class="t" style="left:1611.7px;top:741.00px;font-size:19.2px;color:#222226;letter-spacing:-0.010px;">01 Dec 2025,</span><span class="t" style="left:1728.3px;top:741.00px;font-size:19.2px;color:#46464c;letter-spacing:0.014px;">05:08</span>
</body></html>
